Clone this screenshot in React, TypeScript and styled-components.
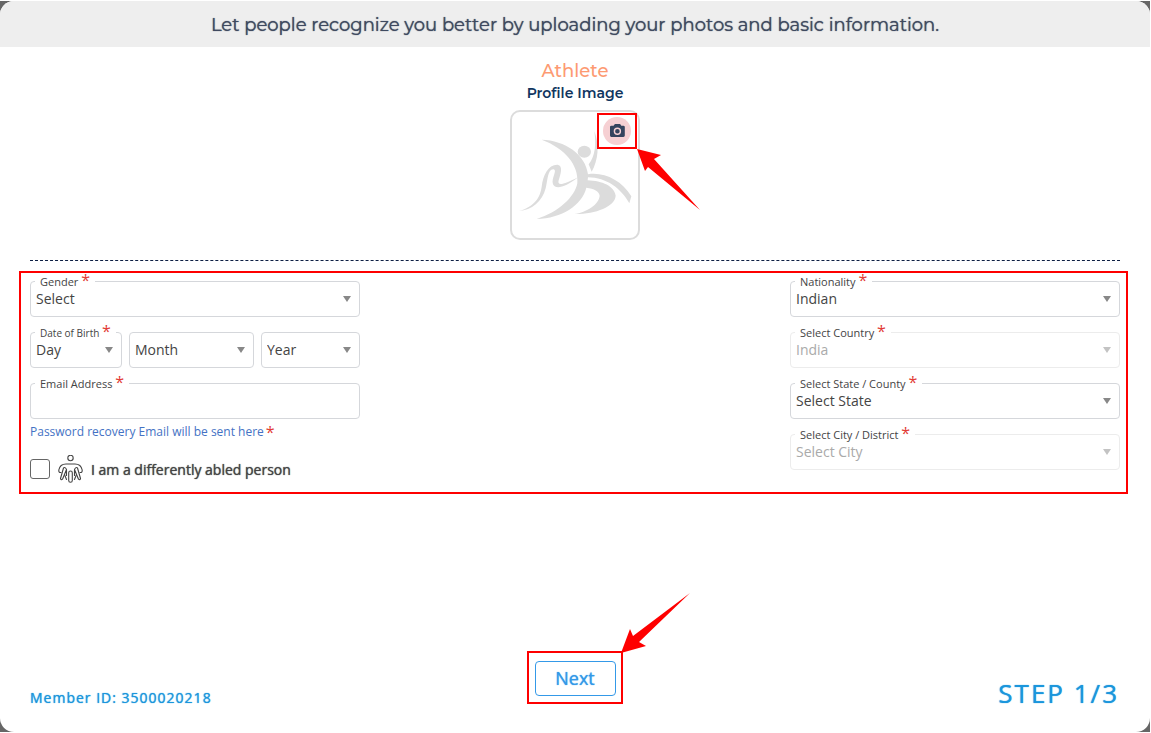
import React from "react";
import styled, { createGlobalStyle } from "styled-components";

const GlobalStyle = createGlobalStyle`
  * { box-sizing: border-box; }
  body {
    margin: 0;
    background: #fff;
    font-family: "Open Sans", "Noto Sans", sans-serif;
    color: #444;
  }
`;

const Backdrop = styled.div`
  display: flex;
  min-height: 100vh;
  background: #666;
  border: 0 solid #fff;
  border-width: 1px 1px 1px 0;
`;

const Dialog = styled.main`
  flex: 1;
  display: flex;
  flex-direction: column;
  background: #fff;
  border-radius: 14px;
  overflow: hidden;
`;

const Banner = styled.header`
  padding: 12px 16px 10px;
  background: #eee;
  color: #3f4a60;
  font: 400 18px/24px Montserrat, Inter, sans-serif;
  text-shadow: 0 0 1px currentColor;
  text-align: center;
`;

const Profile = styled.section`
  display: flex;
  flex-direction: column;
  align-items: center;
  padding: 12px 0 20px;
  font-family: Montserrat, Inter, sans-serif;
`;

const Role = styled.h1`
  margin: 0;
  color: #fd9a72;
  font-size: 18px;
  font-weight: 500;
  line-height: 24px;
`;

const Caption = styled.h2`
  margin: 0 0 7px;
  color: #103560;
  font-size: 14px;
  font-weight: 600;
  line-height: 20px;
`;

const Avatar = styled.div`
  position: relative;
  width: 130px;
  height: 130px;
  border: 2px solid #dcdcdc;
  border-radius: 10px;
`;

const AvatarArt = styled.svg`
  display: block;
  width: 100%;
  height: 100%;
`;

const Callout = styled.div`
  position: relative;
  border: 2px solid #fe0000;
`;

const CameraCallout = styled(Callout)`
  position: absolute;
  top: 1px;
  right: 1px;
  display: grid;
  place-items: center;
  width: 40px;
  height: 36px;
`;

const CameraButton = styled.button`
  display: grid;
  place-items: center;
  width: 28px;
  height: 28px;
  padding: 0;
  border: 0;
  border-radius: 50%;
  background: #f6d0d3;
  color: #35445e;
`;

const Arrow = styled.svg<{ $from: "below" | "above" }>`
  position: absolute;
  left: 100%;
  ${({ $from }) => ($from === "below" ? "top: 100%; margin: 2px;" : "bottom: 100%;")}
  fill: #fe0000;
  overflow: visible;
`;

const Divider = styled.hr`
  align-self: stretch;
  margin: 0 30px 10px;
  border: 0;
  border-top: 1px dashed #0d1f44;
`;

const FormArea = styled(Callout)`
  display: flex;
  justify-content: space-between;
  gap: 24px;
  margin: 0 22px 0 19px;
  padding: 8px 6px 9px 9px;
`;

const Column = styled.div`
  display: flex;
  flex-direction: column;
  gap: 15px;
  width: 330px;
`;

const FieldBox = styled.div<{ $grow?: number }>`
  position: relative;
  flex: ${({ $grow }) => ($grow ? `${$grow} 1 0` : "none")};
  min-width: 0;
`;

const Star = styled.span`
  color: #e23b35;
  font-size: 16px;
  line-height: 12px;
`;

const FieldLabel = styled.label<{ $small?: boolean }>`
  position: absolute;
  z-index: 1;
  top: -8px;
  left: 5px;
  padding: 0 5px;
  background: #fff;
  font-size: ${({ $small }) => ($small ? 10 : 11)}px;
  line-height: 18px;
  white-space: nowrap;
`;

const SelectBox = styled.select`
  appearance: none;
  display: block;
  width: 100%;
  height: 36px;
  padding: 0 24px 0 5px;
  border: 1px solid #d5d7db;
  border-radius: 4px;
  background: #fff;
  color: #444;
  font: 14px/20px "Open Sans", "Noto Sans", sans-serif;
  opacity: 1;

  &:disabled {
    border-color: #ececec;
    color: #aaa;
  }
`;

const Caret = styled.span<{ $muted?: boolean }>`
  position: absolute;
  top: 15px;
  right: 9px;
  border: 4px solid transparent;
  border-top: 6px solid ${({ $muted }) => ($muted ? "#c3c3c3" : "#888")};
  border-bottom: 0;
  pointer-events: none;
`;

const DateRow = styled.div`
  display: flex;
  gap: 7px;
`;

const TextBox = styled.input`
  display: block;
  width: 100%;
  height: 36px;
  padding: 0 5px;
  border: 1px solid #d5d7db;
  border-radius: 4px;
  font: 14px/20px "Open Sans", "Noto Sans", sans-serif;
`;

const Hint = styled.p`
  display: flex;
  gap: 2px;
  align-items: center;
  margin: -11px 0 0;
  color: #4472c4;
  font-size: 12px;
  line-height: 18px;
`;

const CheckRow = styled.label`
  display: flex;
  align-items: center;
  gap: 8px;
  height: 28px;
  margin-top: -1px;
  font-size: 14px;
  text-shadow: 0 0 1px currentColor;
`;

const CheckBox = styled.input`
  appearance: none;
  width: 20px;
  height: 20px;
  margin: 0;
  border: 1px solid #666;
  border-radius: 3px;
  background: #fff;
`;

const Footer = styled.footer`
  display: grid;
  grid-template-columns: 1fr auto 1fr;
  align-items: end;
  margin-top: auto;
  padding: 0 31px 20px 30px;
  color: #1b96dc;
`;

const MemberId = styled.span`
  font-size: 14px;
  line-height: 28px;
  letter-spacing: 1px;
  text-shadow: 0 0 1px currentColor;
`;

const Step = styled.span`
  justify-self: end;
  font-size: 26px;
  line-height: 38px;
  letter-spacing: 2px;
  text-shadow: 0 0 1px currentColor;
`;

const NextCallout = styled(Callout)`
  margin-bottom: 8px;
  padding: 8px 5px 6px 6px;
`;

const NextButton = styled.button`
  display: block;
  width: 81px;
  height: 35px;
  padding: 0 0 1px;
  border: 1px solid #3499e8;
  border-radius: 4px;
  background: #fff;
  color: #3499e8;
  font: 400 18px/24px "Open Sans", "Noto Sans", sans-serif;
  text-shadow: 0 0 1px currentColor;
`;

type DropDownProps = {
  id: string;
  value: string;
  label?: string;
  name?: string;
  disabled?: boolean;
  grow?: number;
};

function DropDown({ id, value, label, name, disabled, grow }: DropDownProps) {
  return (
    <FieldBox $grow={grow}>
      {label && (
        <FieldLabel htmlFor={id} $small={Boolean(grow)}>
          {label} <Star>*</Star>
        </FieldLabel>
      )}
      <SelectBox id={id} disabled={disabled} aria-label={name}>
        <option>{value}</option>
      </SelectBox>
      <Caret $muted={disabled} />
    </FieldBox>
  );
}

function AthleteArt() {
  return (
    <AvatarArt viewBox="-9 -39 378 378" fill="#dcdcdc" aria-hidden="true">
      <ellipse cx="208" cy="80" rx="20" ry="18" />
      <path d="M238 18C254 60 250 105 230 140L221 118C240 95 244 60 238 18Z" />
      <path d="M80 44C150 46 212 88 219 148C265 140 320 165 349 214L343 235C318 190 275 158 219 157L218 166C262 168 298 183 302 212C300 245 240 268 178 267C215 262 252 238 254 212C252 198 238 191 214 188C202 240 140 280 65 282C130 262 180 215 187 175C192 120 150 70 80 44Z" />
      <path d="M12 258C60 245 76 215 80 185C84 150 100 118 128 119C145 122 137 148 131 166C126 184 145 180 190 156C150 188 122 194 114 178C108 160 128 136 116 133C98 131 98 165 92 190C82 230 50 256 12 258Z" />
    </AvatarArt>
  );
}

function CameraIcon() {
  return (
    <svg width="16" height="14" viewBox="0 0 16 14" aria-hidden="true">
      <path
        fill="currentColor"
        fillRule="evenodd"
        d="M5.9 0h5.2l1.2 1.700h2.100a1.400 1.400 0 0 1 1.400 1.400v8.500a1.400 1.400 0 0 1-1.400 1.400H2.400A1.400 1.400 0 0 1 1 11.600V3.100a1.400 1.400 0 0 1 1.400-1.400h2.200ZM8.400 3.500a3.700 3.700 0 1 0 0 7.400 3.700 3.700 0 0 0 0-7.400Zm0 1.400a2.300 2.300 0 1 1 0 4.600 2.300 2.300 0 0 1 0-4.600Z"
      />
    </svg>
  );
}

function PeopleIcon() {
  return (
    <svg
      width="25"
      height="28"
      viewBox="0 0 25 28"
      fill="none"
      stroke="#444"
      strokeWidth="1.1"
      strokeLinejoin="round"
      strokeLinecap="round"
      aria-hidden="true"
    >
      <circle cx="12.500" cy="3" r="2.700" />
      <path d="M3 17.500Q.6 18 .8 15Q2 9 8 9H17Q23 9 24.200 15Q24.400 18 22 17.500" />
      <rect x="10.700" y="16" width="3.600" height="11.300" rx="1.800" />
      <path d="M5.500 13L2.500 23.500Q3 25.500 4.500 24.200L8.500 14.500V20.500M5.500 13Q7 11.500 8.500 14.500" />
      <path d="M19.500 13L22.500 23.500Q22 25.500 20.500 24.200L16.500 14.500V20.500M19.500 13Q18 11.500 16.500 14.500" />
      <path d="M6.700 20L8.500 24.500M18.300 20L16.500 24.500" />
    </svg>
  );
}

export default function App() {
  return (
    <>
      <GlobalStyle />
      <Backdrop>
        <Dialog>
          <Banner>
            Let people recognize you better by uploading your photos and basic
            information.
          </Banner>
          <Profile>
            <Role>Athlete</Role>
            <Caption>Profile Image</Caption>
            <Avatar>
              <AthleteArt />
              <CameraCallout>
                <CameraButton type="button" aria-label="Upload photo">
                  <CameraIcon />
                </CameraButton>
                <Arrow $from="below" width="63" height="61" viewBox="0 0 63 61">
                  <path d="M0 0L24 6L17 10L63 61L11 18L8 22Z" />
                </Arrow>
              </CameraCallout>
            </Avatar>
          </Profile>
          <Divider />
          <FormArea>
            <Column>
              <DropDown id="gender" label="Gender" value="Select" />
              <DateRow>
                <DropDown id="day" label="Date of Birth" value="Day" grow={92} />
                <DropDown id="month" name="Month" value="Month" grow={125} />
                <DropDown id="year" name="Year" value="Year" grow={99} />
              </DateRow>
              <FieldBox>
                <FieldLabel htmlFor="email">
                  Email Address <Star>*</Star>
                </FieldLabel>
                <TextBox id="email" type="email" />
              </FieldBox>
              <Hint>
                Password recovery Email will be sent here <Star>*</Star>
              </Hint>
              <CheckRow>
                <CheckBox type="checkbox" />
                <PeopleIcon />I am a differently abled person
              </CheckRow>
            </Column>
            <Column>
              <DropDown id="nationality" label="Nationality" value="Indian" />
              <DropDown id="country" label="Select Country" value="India" disabled />
              <DropDown id="state" label="Select State / County" value="Select State" />
              <DropDown id="city" label="Select City / District" value="Select City" disabled />
            </Column>
          </FormArea>
          <Footer>
            <MemberId>Member ID: 3500020218</MemberId>
            <NextCallout>
              <NextButton type="button">Next</NextButton>
              <Arrow $from="above" width="69" height="60" viewBox="0 0 69 60">
                <path d="M0 60L9 36L12 43L69 0L18 49L25 53Z" />
              </Arrow>
            </NextCallout>
            <Step>STEP 1/3</Step>
          </Footer>
        </Dialog>
      </Backdrop>
    </>
  );
}
